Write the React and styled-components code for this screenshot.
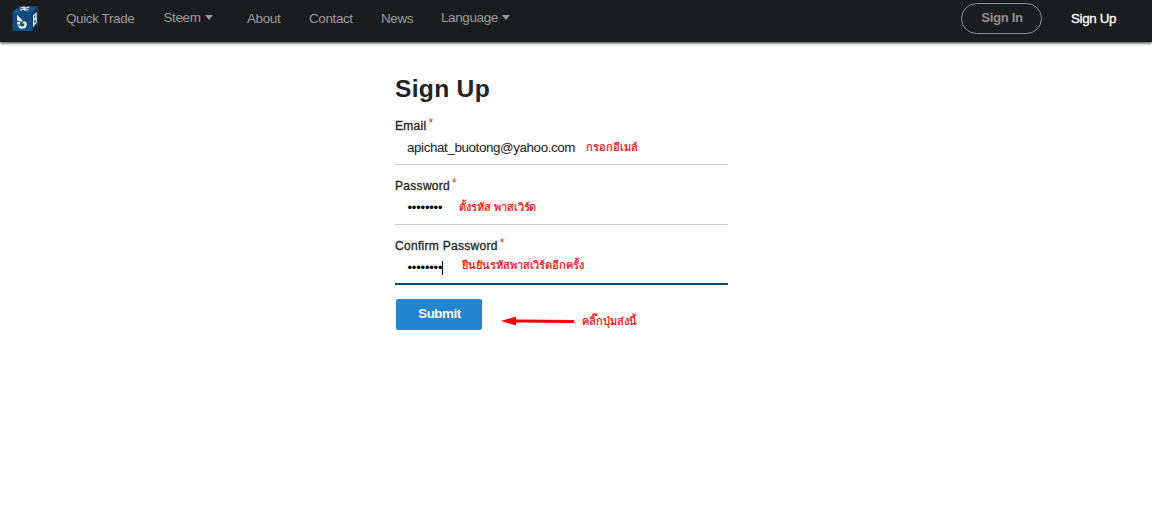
import React from 'react';
import styled, { createGlobalStyle } from 'styled-components';

function Logo() {
    return (
        <LogoSvg viewBox="0 0 27 26" aria-hidden="true">
            <path d="M0.5 6 L7.5 0.2 H26 L20 6 Z" fill="#1a5488" />
            <path d="M20 6 L26 0 V18.5 L20 25 Z" fill="#0c3a66" />
            <path d="M0.5 6 H20 V25 H0.5 Z" fill="#114b80" />
            <path d="M8.5 2 L12 1 L13.5 2.2 L17.5 0.9 M8 4.2 L11.5 3 L13 4.4 L16.5 3.4 M12 1.2 L13 4" stroke="#d6e1eb" strokeWidth="1.2" fill="none" />
            <path d="M5 8.8 L10.6 14.6 L9.6 15.8 L5 14.6 Z" fill="#f2f6f9" />
            <path d="M5.2 16 H8.2 V18.4 H5.4 Z M11 15.4 Q14.8 15 14.8 18.6 Q14.4 23 9.8 22.8 Q6.6 22.4 5.6 19.4 H8.4 L10 20.8 L12.4 19.6 L12.2 17.6 H10.4 Z" fill="#f2f6f9" />
            <path d="M21.6 8.6 V20.4 M21.8 9.8 L24 7.6 V11.6 L21.8 13.8 L24.2 12.6 V16.4 L21.8 18.8" stroke="#dce6ef" strokeWidth="1.3" fill="none" />
        </LogoSvg>
    );
}

function Field({ label, active, children }) {
    return (
        <FieldStyled>
            <Label>{label}<Required>*</Required></Label>
            <Value $active={active}>{children}</Value>
        </FieldStyled>
    );
}

function App() {
    return (
        <>
            <GlobalStyle />
            <Navbar>
                <Logo />
                <NavLink $gap={27} $width={69}>Quick Trade</NavLink>
                <NavLink $gap={28.5} $width={48} $raised>Steem<Caret /></NavLink>
                <NavLink $gap={35.5} $width={34}>About</NavLink>
                <NavLink $gap={28} $width={44}>Contact</NavLink>
                <NavLink $gap={28} $width={32}>News</NavLink>
                <NavLink $gap={28} $width={68} $raised>Language<Caret /></NavLink>
                <SignInButton>Sign In</SignInButton>
                <SignUpLink>Sign Up</SignUpLink>
            </Navbar>
            <Form>
                <Title>Sign Up</Title>
                <Field label="Email"><Email>apichat_buotong@yahoo.com</Email></Field>
                <Field label="Password"><Dots>••••••••</Dots></Field>
                <Field label="Confirm Password" active><Dots>••••••••</Dots><Cursor /></Field>
                <Submit>Submit</Submit>
                <Note $x={191} $y={66}>กรอกอีเมล์</Note>
                <Note $x={64} $y={126}>ตั้งรหัส พาสเวิร์ด</Note>
                <Note $x={67} $y={184}>ยืนยันรหัสพาสเวิร์ดอีกครั้ง</Note>
                <Note $x={187} $y={240}>คลิ๊กปุ่มส่งนี้</Note>
                <Arrow viewBox="0 0 74 10">
                    <path d="M0 5 L15 0.5 V9.5 Z" fill="#fb0007" />
                    <path d="M14 5 L72 5.5" stroke="#fb0007" strokeWidth="2.8" strokeLinecap="round" />
                </Arrow>
            </Form>
        </>
    );
}

const GlobalStyle = createGlobalStyle`
    body{
        margin: 0;
        background: #fff;
        font-family: "Liberation Sans", Arial, sans-serif;
        overflow: hidden;
    }
`;

const Navbar = styled.nav`
    display: flex;
    align-items: flex-start;
    box-sizing: border-box;
    height: 42px;
    padding-left: 12px;
    background: #1b1c1e;
    box-shadow: 0 1px 3px rgba(0, 0, 0, 0.85);
`;

const LogoSvg = styled.svg`
    flex: none;
    width: 27px;
    height: 26px;
    margin-top: 6px;
`;

const NavLink = styled.a`
    display: flex;
    flex: none;
    width: ${({ $width }) => $width}px;
    margin-left: ${({ $gap }) => $gap}px;
    padding-top: ${({ $raised }) => ($raised ? 10 : 11)}px;
    color: #9a9b9c;
    font-size: 13.5px;
    line-height: 15px;
    letter-spacing: -0.4px;
    white-space: nowrap;
`;

const Caret = styled.span`
    height: 0;
    margin: 5px 0 0 4px;
    border: 4px solid transparent;
    border-top: 5px solid #9a9b9c;
    border-bottom: 0;
`;

const SignInButton = styled.a`
    box-sizing: border-box;
    width: 81px;
    height: 31px;
    margin: 3px 0 0 auto;
    border: 1px solid #8d8e8f;
    border-radius: 16px;
    color: #8d8e8f;
    font-size: 13.3px;
    font-weight: bold;
    line-height: 28px;
    letter-spacing: -0.4px;
    text-indent: 1px;
    text-align: center;
`;

const SignUpLink = styled.a`
    width: 46px;
    margin: 11px 35px 0 29px;
    color: #fff;
    font-size: 13.4px;
    line-height: 15px;
    letter-spacing: -0.35px;
    white-space: nowrap;
    -webkit-text-stroke: 0.3px #fff;
`;

const Form = styled.main`
    position: relative;
    width: 333px;
    margin: 32px 0 0 395px;
`;

const Title = styled.h1`
    margin: 0;
    color: #222;
    font-size: 24.6px;
    line-height: 30px;
    letter-spacing: 0.3px;
`;

const FieldStyled = styled.div`
    height: 60px;
    padding-top: 15px;
    box-sizing: border-box;
`;

const Label = styled.label`
    display: flex;
    height: 15px;
    color: #222;
    font-size: 12px;
    line-height: 15px;
    letter-spacing: 0.3px;
    -webkit-text-stroke: 0.3px #222;
`;

const Required = styled.span`
    margin: -3px 0 0 2px;
    color: #c33a2c;
    -webkit-text-stroke: 0;
`;

const Value = styled.div`
    display: flex;
    align-items: center;
    box-sizing: border-box;
    height: 31px;
    padding: 0 0 ${({ $active }) => ($active ? 2 : 3)}px 12px;
    border-bottom: ${({ $active }) => ($active ? '2px solid #0f4a7b' : '1px solid #ccc')};
    color: #222;
`;

const Email = styled.span`
    font-size: 13.4px;
    letter-spacing: -0.4px;
`;

const Dots = styled.span`
    margin-left: 0.5px;
    color: #000;
    font-size: 13px;
    letter-spacing: -0.2px;
`;

const Cursor = styled.span`
    width: 1px;
    height: 14px;
    margin-left: -0.5px;
    background: #000;
`;

const Submit = styled.button`
    display: block;
    width: 86px;
    height: 31px;
    margin: 15px 0 0 1px;
    padding: 0 0 2px 1px;
    border: 0;
    border-radius: 2px;
    background: #2185d0;
    color: #fff;
    font: bold 13.3px "Liberation Sans", Arial, sans-serif;
    letter-spacing: -0.4px;
`;

const Note = styled.span`
    position: absolute;
    left: ${({ $x }) => $x}px;
    top: ${({ $y }) => $y}px;
    color: #f00;
    font-size: 11px;
    line-height: 14px;
    letter-spacing: -0.05px;
    white-space: nowrap;
    -webkit-text-stroke: 0.2px #f00;
`;

const Arrow = styled.svg`
    position: absolute;
    left: 106px;
    top: 242px;
    width: 74px;
    height: 10px;
`;

export default App;
